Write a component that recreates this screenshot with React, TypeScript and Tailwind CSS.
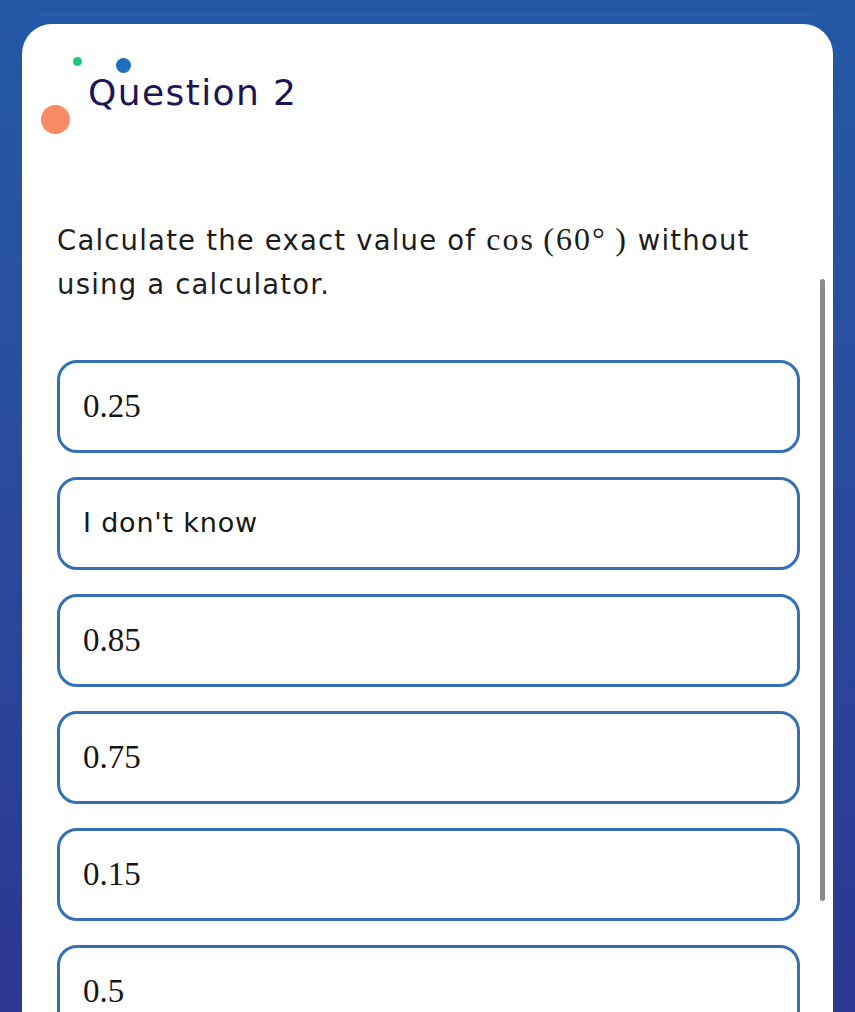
import React from 'react';

const options = [
  { label: '0.25', math: true },
  { label: "I don't know", math: false },
  { label: '0.85', math: true },
  { label: '0.75', math: true },
  { label: '0.15', math: true },
  { label: '0.5', math: true },
];

const sans = { fontFamily: '"DejaVu Sans", "Open Sans", sans-serif' };
const serif = { fontFamily: '"Liberation Serif", serif' };

function Dots() {
  return (
    <div className="absolute inset-0 pointer-events-none">
      <span className="absolute left-[51px] top-[33px] w-[9px] h-[9px] rounded-full bg-[#22c77a]"></span>
      <span className="absolute left-[94px] top-[34px] w-[15px] h-[15px] rounded-full bg-[#1f6fc0]"></span>
      <span className="absolute left-[19px] top-[81px] w-[29px] h-[29px] rounded-full bg-[#fb8a66]"></span>
    </div>
  );
}

export default function App() {
  return (
    <div className="h-[1012px] overflow-hidden bg-gradient-to-b from-[#2358a7] via-[#2a4a9f] to-[#2b3791] flex flex-col">
      {/* top status strip */}
      <div className="h-[24px] shrink-0 flex flex-col">
        <div className="h-[13px]"></div>
        <div className="h-[3px] mx-[40px] bg-[#2d62ad]/70"></div>
      </div>

      <div className="mx-[22px] flex-1 bg-white rounded-t-[30px] relative">
        <Dots />

        {/* scrollbar */}
        <div className="absolute right-[8px] top-[255px] w-[5px] h-[622px] rounded-full bg-[#8b8b8b]"></div>

        <div className="pl-[35px] pr-[33px]">
          <h1 className="pl-[31px] pt-[47px] text-[36px] leading-[44px] font-normal text-[#1b1654] tracking-[1.4px]" style={sans}>
            Question 2
          </h1>

          <div className="mt-[102px] text-[27.5px] leading-[44px] tracking-[1.2px] text-[#1d1d1d]" style={sans}>
            <div className="flex items-baseline gap-[10px]">
              <span>Calculate the exact value of</span>
              <span className="text-[32px] tracking-[2px]" style={serif}>
                {'cos\u2009(60°\u2009)'}
              </span>
              <span>without</span>
            </div>
            <div>using a calculator.</div>
          </div>

          <div className="mt-[54px] flex flex-col gap-[24px]">
            {options.map((o) => (
              <div
                key={o.label}
                className="h-[93px] shrink-0 border-[3.5px] border-[#3470b6] rounded-[20px] flex items-center pl-[23px]"
              >
                {o.math ? (
                  <span className="text-[33px] text-[#161616]" style={serif}>
                    {o.label}
                  </span>
                ) : (
                  <span className="text-[27px] tracking-[0.8px] text-[#161616]" style={sans}>
                    {o.label}
                  </span>
                )}
              </div>
            ))}
          </div>
        </div>
      </div>
    </div>
  );
}
